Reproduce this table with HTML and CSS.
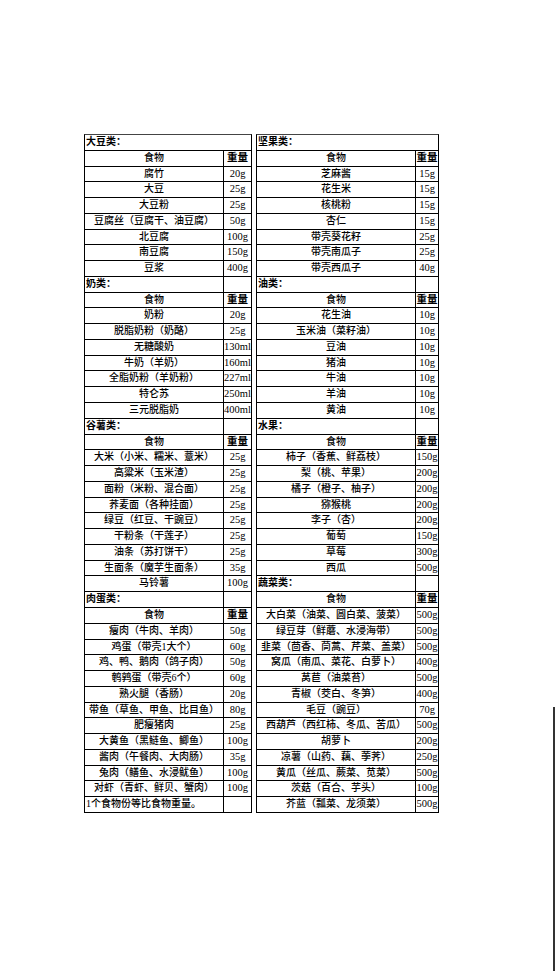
FILE: index.html
```html
<!DOCTYPE html>
<html lang="zh-CN">
<head>
<meta charset="utf-8">
<title>食物交换份</title>
<link rel="stylesheet" href="styles.css">
</head>
<body>
<div class="sheet">
  <div class="tbl left">
    <div class="c h span">大豆类：</div>
    <div class="c">食物</div><div class="c w b">重量</div>
    <div class="c">腐竹</div><div class="c w">20g</div>
    <div class="c">大豆</div><div class="c w">25g</div>
    <div class="c">大豆粉</div><div class="c w">25g</div>
    <div class="c">豆腐丝（豆腐干、油豆腐）</div><div class="c w">50g</div>
    <div class="c">北豆腐</div><div class="c w">100g</div>
    <div class="c">南豆腐</div><div class="c w">150g</div>
    <div class="c">豆浆</div><div class="c w">400g</div>

    <div class="c h">奶类：</div><div class="c w"></div>
    <div class="c">食物</div><div class="c w b">重量</div>
    <div class="c">奶粉</div><div class="c w">20g</div>
    <div class="c">脱脂奶粉（奶酪）</div><div class="c w">25g</div>
    <div class="c">无糖酸奶</div><div class="c w">130ml</div>
    <div class="c">牛奶（羊奶）</div><div class="c w">160ml</div>
    <div class="c">全脂奶粉（羊奶粉）</div><div class="c w">227ml</div>
    <div class="c">特仑苏</div><div class="c w">250ml</div>
    <div class="c">三元脱脂奶</div><div class="c w">400ml</div>

    <div class="c h">谷薯类：</div><div class="c w"></div>
    <div class="c">食物</div><div class="c w b">重量</div>
    <div class="c">大米（小米、糯米、薏米）</div><div class="c w">25g</div>
    <div class="c">高粱米（玉米渣）</div><div class="c w">25g</div>
    <div class="c">面粉（米粉、混合面）</div><div class="c w">25g</div>
    <div class="c">荞麦面（各种挂面）</div><div class="c w">25g</div>
    <div class="c">绿豆（红豆、干豌豆）</div><div class="c w">25g</div>
    <div class="c">干粉条（干莲子）</div><div class="c w">25g</div>
    <div class="c">油条（苏打饼干）</div><div class="c w">25g</div>
    <div class="c">生面条（魔芋生面条）</div><div class="c w">35g</div>
    <div class="c">马铃薯</div><div class="c w">100g</div>

    <div class="c h">肉蛋类：</div><div class="c w"></div>
    <div class="c">食物</div><div class="c w b">重量</div>
    <div class="c">瘦肉（牛肉、羊肉）</div><div class="c w">50g</div>
    <div class="c">鸡蛋（带壳1大个）</div><div class="c w">60g</div>
    <div class="c">鸡、鸭、鹅肉（鸽子肉）</div><div class="c w">50g</div>
    <div class="c">鹌鹑蛋（带壳6个）</div><div class="c w">60g</div>
    <div class="c">熟火腿（香肠）</div><div class="c w">20g</div>
    <div class="c">带鱼（草鱼、甲鱼、比目鱼）</div><div class="c w">80g</div>
    <div class="c">肥瘦猪肉</div><div class="c w">25g</div>
    <div class="c">大黄鱼（黑鲢鱼、鲫鱼）</div><div class="c w">100g</div>
    <div class="c">酱肉（午餐肉、大肉肠）</div><div class="c w">35g</div>
    <div class="c">兔肉（鳝鱼、水浸鱿鱼）</div><div class="c w">100g</div>
    <div class="c">对虾（青虾、鲜贝、蟹肉）</div><div class="c w">100g</div>
    <div class="c note">1个食物份等比食物重量。</div><div class="c w"></div>
  </div>

  <div class="tbl right">
    <div class="c h span">坚果类：</div>
    <div class="c">食物</div><div class="c w b">重量</div>
    <div class="c">芝麻酱</div><div class="c w">15g</div>
    <div class="c">花生米</div><div class="c w">15g</div>
    <div class="c">核桃粉</div><div class="c w">15g</div>
    <div class="c">杏仁</div><div class="c w">15g</div>
    <div class="c">带壳葵花籽</div><div class="c w">25g</div>
    <div class="c">带壳南瓜子</div><div class="c w">25g</div>
    <div class="c">带壳西瓜子</div><div class="c w">40g</div>

    <div class="c h">油类：</div><div class="c w"></div>
    <div class="c">食物</div><div class="c w b">重量</div>
    <div class="c">花生油</div><div class="c w">10g</div>
    <div class="c">玉米油（菜籽油）</div><div class="c w">10g</div>
    <div class="c">豆油</div><div class="c w">10g</div>
    <div class="c">猪油</div><div class="c w">10g</div>
    <div class="c">牛油</div><div class="c w">10g</div>
    <div class="c">羊油</div><div class="c w">10g</div>
    <div class="c">黄油</div><div class="c w">10g</div>

    <div class="c h">水果：</div><div class="c w"></div>
    <div class="c">食物</div><div class="c w b">重量</div>
    <div class="c">柿子（香蕉、鲜荔枝）</div><div class="c w">150g</div>
    <div class="c">梨（桃、苹果）</div><div class="c w">200g</div>
    <div class="c">橘子（橙子、柚子）</div><div class="c w">200g</div>
    <div class="c">猕猴桃</div><div class="c w">200g</div>
    <div class="c">李子（杏）</div><div class="c w">200g</div>
    <div class="c">葡萄</div><div class="c w">150g</div>
    <div class="c">草莓</div><div class="c w">300g</div>
    <div class="c">西瓜</div><div class="c w">500g</div>

    <div class="c h">蔬菜类：</div><div class="c w"></div>
    <div class="c">食物</div><div class="c w b">重量</div>
    <div class="c">大白菜（油菜、圆白菜、菠菜）</div><div class="c w">500g</div>
    <div class="c">绿豆芽（鲜蘑、水浸海带）</div><div class="c w">500g</div>
    <div class="c">韭菜（茴香、茼蒿、芹菜、盖菜）</div><div class="c w">500g</div>
    <div class="c">窝瓜（南瓜、菜花、白萝卜）</div><div class="c w">400g</div>
    <div class="c">莴苣（油菜苔）</div><div class="c w">500g</div>
    <div class="c">青椒（茭白、冬笋）</div><div class="c w">400g</div>
    <div class="c">毛豆（豌豆）</div><div class="c w">70g</div>
    <div class="c">西葫芦（西红柿、冬瓜、苦瓜）</div><div class="c w">500g</div>
    <div class="c">胡萝卜</div><div class="c w">200g</div>
    <div class="c">凉薯（山药、藕、荸荠）</div><div class="c w">250g</div>
    <div class="c">黄瓜（丝瓜、蕨菜、苋菜）</div><div class="c w">500g</div>
    <div class="c">茨菇（百合、芋头）</div><div class="c w">100g</div>
    <div class="c">芥蓝（瓢菜、龙须菜）</div><div class="c w">500g</div>
  </div>
</div>
<div class="scrollbar"></div>
</body>
</html>
```

FILE: styles.css
```css
html, body {
  margin: 0;
  padding: 0;
  background: #fff;
}
body {
  font-family: "Liberation Serif", "Noto Sans CJK SC", serif;
  color: #000;
}
.sheet {
  display: flex;
  align-items: flex-start;
  gap: 4px;
  padding: 134px 0 0 84px;
}
.tbl {
  display: grid;
  grid-auto-rows: 14.77px;
  gap: 1px;
  background: #000;
  border: 1px solid #000;
  border-top-color: #444;
}
.left {
  grid-template-columns: 138px 27px;
}
.right {
  grid-template-columns: 158px 22px;
}
.c {
  background: #fff;
  font-size: 10px;
  font-weight: 500;
  line-height: 14.77px;
  text-align: center;
  white-space: nowrap;
}
.w {
  font-size: 10.5px;
  font-weight: normal;
}
.h {
  text-align: left;
  padding-left: 1px;
  font-weight: bold;
}
.span {
  grid-column: span 2;
}
.b {
  font-weight: bold;
}
.note {
  text-align: left;
  padding-left: 1px;
}
.scrollbar {
  position: absolute;
  left: 553px;
  top: 707px;
  width: 2px;
  height: 264px;
  background: #333;
}
```
